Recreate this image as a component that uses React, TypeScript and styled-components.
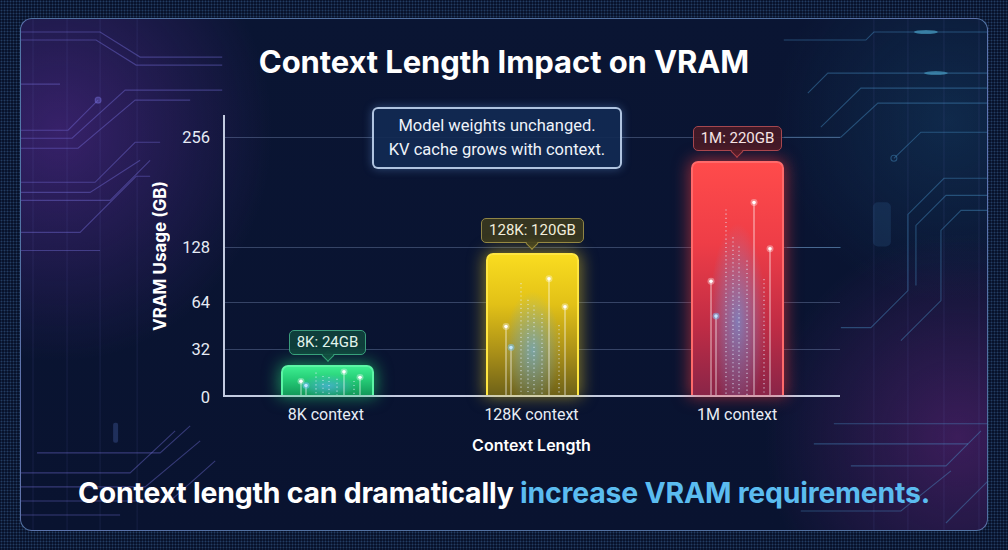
import React from "react";
import styled, { createGlobalStyle, css } from "styled-components";

const GlobalStyle = createGlobalStyle`
  html, body {
    margin: 0;
    padding: 0;
    background: #08122b;
  }
  body {
    font-family: "Roboto", "Inter", sans-serif;
  }
`;

type Tone = "green" | "yellow" | "red";

const tones: Record<
  Tone,
  { bar: string; edge: string; glow: string; tagBg: string; tagBorder: string; tagText: string }
> = {
  green: {
    bar: "linear-gradient(180deg, #3cec8f 0%, #25cc76 45%, #139a5a 100%)",
    edge: "#5cf5a5",
    glow: "rgba(40, 230, 120, 0.55)",
    tagBg: "rgba(16, 66, 60, 0.92)",
    tagBorder: "#3a9c7c",
    tagText: "#e2f4ec",
  },
  yellow: {
    bar: "linear-gradient(180deg, #f9dc20 0%, #e2c117 35%, #a98f18 70%, #6f6218 100%)",
    edge: "#ffe640",
    glow: "rgba(250, 215, 30, 0.5)",
    tagBg: "rgba(58, 56, 30, 0.92)",
    tagBorder: "#8f8446",
    tagText: "#f2eedb",
  },
  red: {
    bar: "linear-gradient(180deg, #ff4b4b 0%, #ee3d47 35%, #c02c45 70%, #8a2548 100%)",
    edge: "#ff6a6a",
    glow: "rgba(255, 60, 60, 0.55)",
    tagBg: "rgba(70, 26, 38, 0.92)",
    tagBorder: "#a5474f",
    tagText: "#f6e4e4",
  },
};

const Page = styled.div`
  width: 1008px;
  height: 550px;
  box-sizing: border-box;
  padding: 18px 20px 19px 20px;
  background-color: #08122b;
  background-image: radial-gradient(circle, rgba(90, 150, 215, 0.32) 0.7px, transparent 1.2px);
  background-size: 3px 3px;
  overflow: hidden;
`;

const Frame = styled.div`
  position: relative;
  height: 100%;
  box-sizing: border-box;
  border: 1.5px solid rgba(130, 175, 235, 0.6);
  border-radius: 12px;
  padding-top: 25px;
  display: flex;
  flex-direction: column;
  align-items: center;
  overflow: hidden;
  background:
    radial-gradient(ellipse 22% 45% at 4% 22%, rgba(100, 45, 160, 0.5), transparent 100%),
    radial-gradient(ellipse 20% 40% at 97% 82%, rgba(120, 40, 140, 0.45), transparent 100%),
    radial-gradient(ellipse 18% 35% at 96% 20%, rgba(25, 80, 120, 0.35), transparent 100%),
    linear-gradient(180deg, #0a1533 0%, #091330 100%);
`;

const Circuit = styled.svg`
  position: absolute;
  inset: 0;
  width: 100%;
  height: 100%;
  pointer-events: none;
`;

const Title = styled.h1`
  position: relative;
  margin: 0;
  font-family: "Inter", "Roboto", sans-serif;
  font-weight: 700;
  font-size: 31px;
  line-height: 36px;
  color: #ffffff;
  letter-spacing: -0.1px;
`;

const ChartRow = styled.div`
  position: relative;
  align-self: stretch;
  display: flex;
  align-items: flex-start;
  margin-top: 35px;
  padding-left: 127px;
`;

const YTitleCol = styled.div`
  width: 24px;
  height: 282px;
  display: flex;
  align-items: center;
  justify-content: center;
`;

const YTitle = styled.span`
  writing-mode: vertical-rl;
  transform: rotate(180deg);
  font-family: "Inter", "Roboto", sans-serif;
  font-weight: 700;
  font-size: 17px;
  color: #ffffff;
  white-space: nowrap;
`;

const TickCol = styled.div`
  position: relative;
  width: 38px;
  height: 282px;
  margin-right: 13px;
`;

const Tick = styled.span`
  position: absolute;
  right: 0;
  transform: translateY(-50%);
  font-size: 16.5px;
  color: #e6ebf5;
`;

const Plot = styled.div`
  position: relative;
  width: 617px;
  height: 282px;
  box-sizing: border-box;
  border-left: 2px solid #c3cbe0;
  border-bottom: 2px solid #c3cbe0;
  display: grid;
  grid-template-columns: repeat(3, 1fr);
  align-items: end;
`;

const GridLine = styled.div`
  position: absolute;
  left: 0;
  right: 0;
  height: 1px;
  background: rgba(150, 172, 215, 0.32);
`;

const Column = styled.div`
  position: relative;
  z-index: 1;
  display: flex;
  flex-direction: column;
  align-items: center;
  justify-content: flex-end;
  height: 100%;
`;

const Tag = styled.div<{ $tone: Tone }>`
  position: relative;
  margin-bottom: 10px;
  padding: 2px 7px;
  border-radius: 5px;
  font-size: 15px;
  line-height: 19px;
  white-space: nowrap;
  ${({ $tone }) => css`
    background: ${tones[$tone].tagBg};
    border: 1.5px solid ${tones[$tone].tagBorder};
    color: ${tones[$tone].tagText};
    &::after {
      content: "";
      position: absolute;
      left: 50%;
      bottom: -6px;
      width: 8px;
      height: 8px;
      transform: translateX(-50%) rotate(45deg);
      background: ${tones[$tone].tagBg};
      border-right: 1.5px solid ${tones[$tone].tagBorder};
      border-bottom: 1.5px solid ${tones[$tone].tagBorder};
    }
  `}
`;

const Bar = styled.div<{ $tone: Tone }>`
  position: relative;
  width: 93px;
  box-sizing: border-box;
  border-radius: 7px 7px 0 0;
  overflow: hidden;
  ${({ $tone }) => css`
    background:
      radial-gradient(ellipse 32% 42% at 50% 68%, rgba(90, 175, 255, 0.6), transparent 100%),
      ${tones[$tone].bar};
    border: 2px solid ${tones[$tone].edge};
    border-bottom: none;
    box-shadow: 0 0 16px 2px ${tones[$tone].glow};
  `}
`;

const Streaks = styled.svg`
  position: absolute;
  inset: 0;
  width: 100%;
  height: 100%;
`;

const Callout = styled.div`
  position: absolute;
  left: 147px;
  top: -8px;
  z-index: 2;
  width: 250px;
  height: 62px;
  box-sizing: border-box;
  border: 2px solid rgba(205, 225, 250, 0.85);
  border-radius: 6px;
  background: rgba(18, 42, 82, 0.92);
  box-shadow: 0 0 10px rgba(120, 180, 255, 0.35);
  display: flex;
  align-items: center;
  justify-content: center;
  text-align: center;
  font-size: 16.5px;
  line-height: 24px;
  color: #eef3fa;
`;

const XRow = styled.div`
  position: relative;
  align-self: stretch;
  margin-top: 8px;
  margin-left: 202px;
  width: 617px;
  display: grid;
  grid-template-columns: repeat(3, 1fr);
`;

const XLabel = styled.span`
  text-align: center;
  font-size: 16px;
  line-height: 20px;
  color: #e8edf6;
`;

const XTitle = styled.div`
  position: relative;
  align-self: stretch;
  margin-left: 202px;
  width: 617px;
  margin-top: 10px;
  text-align: center;
  font-family: "Inter", "Roboto", sans-serif;
  font-weight: 600;
  font-size: 16px;
  line-height: 20px;
  color: #ffffff;
`;

const Footer = styled.p`
  position: relative;
  margin: 21px 0 0 0;
  font-family: "Inter", "Roboto", sans-serif;
  font-weight: 700;
  font-size: 28.4px;
  line-height: 34px;
  color: #ffffff;
  letter-spacing: -0.2px;
  white-space: nowrap;
`;

const Highlight = styled.span`
  color: #5bbcf0;
`;

const ticks = [
  { label: "256", y: 22 },
  { label: "128", y: 132 },
  { label: "64", y: 187 },
  { label: "32", y: 234 },
  { label: "0", y: 282 },
];

const bars: { tone: Tone; tag: string; label: string; height: number }[] = [
  { tone: "green", tag: "8K: 24GB", label: "8K context", height: 30 },
  { tone: "yellow", tag: "128K: 120GB", label: "128K context", height: 142 },
  { tone: "red", tag: "1M: 220GB", label: "1M context", height: 234 },
];

const solid = [
  { x: 18, y: 0.51, blue: false },
  { x: 23, y: 0.66, blue: true },
  { x: 61, y: 0.17, blue: false },
  { x: 77, y: 0.37, blue: false },
];
const dotted = [
  { x: 33, y: 0.2 },
  { x: 40, y: 0.32 },
  { x: 46, y: 0.36 },
  { x: 54, y: 0.42 },
  { x: 71, y: 0.5 },
];

function BarStreaks({ height }: { height: number }) {
  const h = height;
  return (
    <Streaks viewBox={`0 0 89 ${h}`} preserveAspectRatio="none">
      {dotted.map((d) => (
        <line
          key={`d${d.x}`}
          x1={d.x}
          x2={d.x}
          y1={d.y * h}
          y2={h}
          stroke="rgba(225,238,255,0.7)"
          strokeWidth={1.2}
          strokeDasharray="1.2 3"
        />
      ))}
      {solid.map((s) => (
        <g key={`s${s.x}`}>
          <line x1={s.x} x2={s.x} y1={s.y * h} y2={h} stroke="rgba(255,255,255,0.7)" strokeWidth={1} />
          <circle cx={s.x} cy={s.y * h} r={3.5} fill={s.blue ? "rgba(120,200,255,0.5)" : "rgba(255,255,255,0.35)"} />
          <circle cx={s.x} cy={s.y * h} r={1.8} fill={s.blue ? "#bfe6ff" : "#ffffff"} />
        </g>
      ))}
    </Streaks>
  );
}

function CircuitLines() {
  const left = "rgba(125,120,235,0.38)";
  const right = "rgba(80,160,215,0.38)";
  return (
    <Circuit viewBox="21 19 965 510" preserveAspectRatio="none">
      <g stroke="rgba(120,130,220,0.12)" strokeWidth={1}>
        {[33, 67, 100, 137, 873, 907, 943, 978].map((x) => (
          <line key={x} x1={x} x2={x} y1={19} y2={529} />
        ))}
      </g>
      <g fill="none" stroke={left} strokeWidth={1.1}>
        <path d="M21 32 H100 L140 57 H222" />
        <path d="M21 40 H96 L136 65 H222" />
        <path d="M21 84 H60" />
        <path d="M21 130 H68 L98 100" />
        <path d="M21 138 H72 L125 90 H222" />
        <path d="M21 148 H78 L135 100 H190" />
        <path d="M21 182 H95 L135 142 H160" />
        <path d="M21 192 H90 L140 160" />
        <path d="M21 200 H110 L150 160" />
        <path d="M21 232 H80 L136 176 H150" />
        <path d="M21 250 H100" />
        <path d="M37 452 H160 L190 425" />
        <path d="M21 472 H130 L175 430" />
        <path d="M21 486 H145 L200 440" />
        <path d="M21 500 H170 L215 460" />
        <path d="M21 514 H120" />
        <circle cx={98} cy={100} r={3} fill="rgba(125,120,235,0.35)" />
        <rect x={113} y={422} width={5} height={20} rx={2} fill="rgba(100,130,220,0.25)" stroke="none" />
      </g>
      <g fill="none" stroke={right} strokeWidth={1.1}>
        <path d="M987 32 H873 L865 40 H783" />
        <path d="M987 73 H827 L807 93" />
        <path d="M987 88 H860 L820 127" />
        <path d="M987 103 H877 L840 137 H783" />
        <path d="M987 132 H920 L893 158" />
        <path d="M987 178 H943 L907 214 V290 L870 327 H840" />
        <path d="M987 195 H945 L915 225 V285" />
        <path d="M987 210 H960 L940 230 V300 L900 340" />
        <path d="M786 247 H840" />
        <path d="M987 423 H833" />
        <path d="M967 443 H813" />
        <path d="M980 430 L945 465 H850" />
        <path d="M950 470 L900 510 H800" />
        <path d="M987 480 L945 522" />
        <circle cx={893} cy={158} r={3} />
        <rect x={872} y={202} width={18} height={44} rx={5} fill="rgba(60,120,180,0.18)" stroke="none" />
      </g>
      <ellipse cx={925} cy={32} rx={12} ry={2} fill="rgba(90,200,240,0.5)" />
      <ellipse cx={935} cy={73} rx={12} ry={2} fill="rgba(90,200,240,0.45)" />
    </Circuit>
  );
}

function App() {
  return (
    <Page>
      <GlobalStyle />
      <Frame>
        <CircuitLines />
        <Title>Context Length Impact on VRAM</Title>
        <ChartRow>
          <YTitleCol>
            <YTitle>VRAM Usage (GB)</YTitle>
          </YTitleCol>
          <TickCol>
            {ticks.map((t) => (
              <Tick key={t.label} style={{ top: t.y }}>
                {t.label}
              </Tick>
            ))}
          </TickCol>
          <Plot>
            {ticks
              .filter((t) => t.label !== "0")
              .map((t) => (
                <GridLine key={t.label} style={{ top: t.y }} />
              ))}
            <Callout>
              Model weights unchanged.
              <br />
              KV cache grows with context.
            </Callout>
            {bars.map((b) => (
              <Column key={b.tone}>
                <Tag $tone={b.tone}>{b.tag}</Tag>
                <Bar $tone={b.tone} style={{ height: b.height }}>
                  <BarStreaks height={b.height} />
                </Bar>
              </Column>
            ))}
          </Plot>
        </ChartRow>
        <XRow>
          {bars.map((b) => (
            <XLabel key={b.label}>{b.label}</XLabel>
          ))}
        </XRow>
        <XTitle>Context Length</XTitle>
        <Footer>
          Context length can dramatically <Highlight>increase VRAM requirements.</Highlight>
        </Footer>
      </Frame>
    </Page>
  );
}

export default App;
